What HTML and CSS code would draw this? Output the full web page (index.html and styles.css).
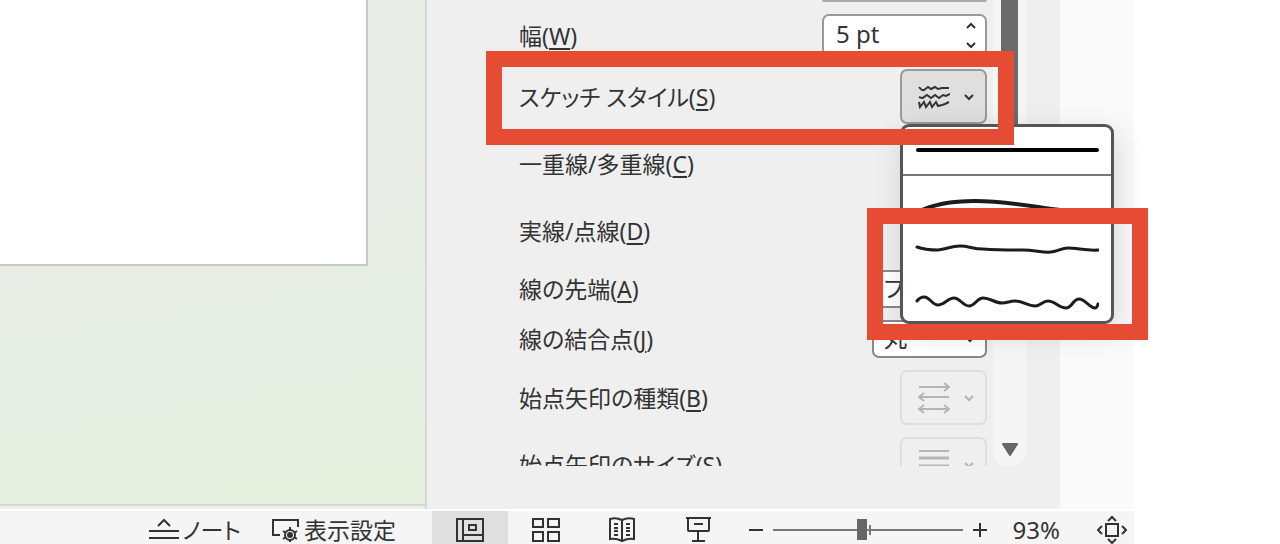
FILE: index.html
```html
<!DOCTYPE html>
<html lang="ja">
<head>
    <meta charset="UTF-8">
    <meta name="viewport" content="width=device-width, initial-scale=1.0">
    <title>図形の書式設定</title>
    <link rel="stylesheet" href="styles.css">
</head>
<body>
    <div class="app">
        <div class="workspace">
            <main class="canvas">
                <div class="slide"></div>
            </main>

            <aside class="pane">
                <div class="rows">
                    <div class="row previous"><span class="previous-box"></span></div>
                    <div class="row">
                        <label for="width">幅(<u>W</u>)</label>
                        <div class="spinner">
                            <input type="text" id="width" value="5 pt">
                            <div class="steps">
                                <button type="button" aria-label="増やす"><svg width="12" height="8" viewBox="0 0 12 8"><path d="M2 6l4-4 4 4"/></svg></button>
                                <button type="button" aria-label="減らす"><svg width="12" height="8" viewBox="0 0 12 8"><path d="M2 2l4 4 4-4"/></svg></button>
                            </div>
                        </div>
                    </div>
                    <div class="row">
                        <label for="sketch">スケッチ スタイル(<u>S</u>)</label>
                        <div class="dropdown">
                            <button type="button" class="picker active" id="sketch">
                                <svg width="32" height="26" viewBox="0 0 32 26">
                                    <path d="M1 3q3 4 5 3l4-3 3 2 4-2 3 2 4-1 7 0M1 13q4 2 5 0l3-2 4 3 4-3 4 3 4-3 3 1 4-2M1 18l1 5 4-5 2 5 4-5 2 5 4-5 2 4 4-1 3-1 4-2"/>
                                </svg>
                                <svg class="chevron" width="12" height="8" viewBox="0 0 12 8"><path d="M2 2l4 4 4-4"/></svg>
                            </button>
                            <div class="menu">
                                <button type="button" class="style straight" aria-label="なし"><svg width="184" height="47" viewBox="0 0 184 47"><path d="M3 23H182"/></svg></button>
                                <button type="button" class="style" aria-label="曲線"><svg width="184" height="49" viewBox="0 0 184 49"><path class="bold" d="M3 36C20 27 40 25 60 25C90 25 115 30 145 34L183 39"/></svg></button>
                                <button type="button" class="style" aria-label="フリーハンド"><svg width="184" height="49" viewBox="0 0 184 49"><path d="M2 22C10 25 16 25 23 25C32 24 36 21 45 21C54 21 58 24 68 24C82 25 98 25 108 25C120 25 128 28 136 27C144 26 146 23 153 23C162 23 172 26 183 25"/></svg></button>
                                <button type="button" class="style" aria-label="落書き"><svg width="184" height="47" viewBox="0 0 184 47"><path d="M2 27Q5 23 9 23C15 23 17 31 23 31C29 31 33 24 39 24C45 24 48 32 54 32C60 32 62 24 68 24C75 24 80 29 87 29C92 29 95 27 100 27C108 27 113 32 120 32C126 32 127 27 133 27C140 27 144 34 151 34C157 34 158 25 164 25C170 25 175 34 180 34Q182 34 183 30"/></svg></button>
                            </div>
                        </div>
                    </div>
                    <div class="row">
                        <label for="compound">一重線/多重線(<u>C</u>)</label>
                        <button type="button" class="picker" id="compound"></button>
                    </div>
                    <div class="row">
                        <label for="dash">実線/点線(<u>D</u>)</label>
                        <button type="button" class="picker" id="dash"></button>
                    </div>
                    <div class="row">
                        <label for="cap">線の先端(<u>A</u>)</label>
                        <div class="combo">
                            <select id="cap"><option>フラット</option></select>
                            <svg class="chevron" width="12" height="8" viewBox="0 0 12 8"><path d="M2 2l4 4 4-4"/></svg>
                        </div>
                    </div>
                    <div class="row">
                        <label for="join">線の結合点(<u>J</u>)</label>
                        <div class="combo">
                            <select id="join"><option>丸</option></select>
                            <svg class="chevron" width="12" height="8" viewBox="0 0 12 8"><path d="M2 2l4 4 4-4"/></svg>
                        </div>
                    </div>
                    <div class="row">
                        <label for="arrowType">始点矢印の種類(<u>B</u>)</label>
                        <button type="button" class="picker" id="arrowType" disabled>
                            <svg width="32" height="32" viewBox="0 0 32 32">
                                <path d="M1 5H30M26 1l5 4-5 4M31 15H2M6 11l-5 4 5 4M2 27H30M6 23l-5 4 5 4M26 23l5 4-5 4"/>
                            </svg>
                            <svg class="chevron" width="12" height="8" viewBox="0 0 12 8"><path d="M2 2l4 4 4-4"/></svg>
                        </button>
                    </div>
                    <div class="row">
                        <label for="arrowSize">始点矢印のサイズ(<u>S</u>)</label>
                        <button type="button" class="picker" id="arrowSize" disabled>
                            <svg width="32" height="32" viewBox="0 0 32 32">
                                <path d="M1 2H31"/>
                                <path class="thick" d="M1 9H31M1 17H31"/>
                            </svg>
                            <svg class="chevron" width="12" height="8" viewBox="0 0 12 8"><path d="M2 2l4 4 4-4"/></svg>
                        </button>
                    </div>
                </div>
                <div class="scrollbar">
                    <div class="thumb"></div>
                    <svg width="18" height="14" viewBox="0 0 18 14"><path d="M2 1H16L9 12Z"/></svg>
                </div>
            </aside>

            <div class="gutter"></div>
        </div>

        <footer class="statusbar">
            <div class="tools">
                <button type="button" class="tool">
                    <svg width="32" height="24" viewBox="0 0 32 24"><path d="M10 8l6-6 6 6M1 13H31M1 20H31"/></svg>
                    ノート
                </button>
                <button type="button" class="tool">
                    <svg width="30" height="26" viewBox="0 0 30 26">
                        <path d="M9 18H2V3H27V10"/>
                        <path d="M19 10v3M19 22v3M12 14l3 2M23 20l3 2M26 14l-3 2M15 20l-3 2"/>
                        <circle cx="19" cy="18" r="5"/>
                        <circle class="dot" cx="19" cy="18" r="2"/>
                    </svg>
                    表示設定
                </button>
            </div>
            <div class="views">
                <button type="button" class="view selected" aria-label="標準">
                    <svg width="30" height="26" viewBox="0 0 30 26"><path d="M2 2H28V24H2ZM8 2V24M8 18H28M14 8H21V13H14Z"/></svg>
                </button>
                <button type="button" class="view" aria-label="スライド一覧">
                    <svg width="30" height="26" viewBox="0 0 30 26"><path d="M2 2H12V10H2ZM17 2H28V10H17ZM2 15H12V24H2ZM17 15H28V24H17Z"/></svg>
                </button>
                <button type="button" class="view" aria-label="閲覧表示">
                    <svg width="30" height="26" viewBox="0 0 30 26">
                        <path d="M15 3Q9 0 3 2V22Q9 21 15 24Q21 21 27 22V2Q21 0 15 3V25"/>
                        <path d="M7 7h4M7 11h4M7 14h4M7 18h4M19 7h4M19 11h4M19 14h4M19 18h4"/>
                    </svg>
                </button>
                <button type="button" class="view" aria-label="スライドショー">
                    <svg width="30" height="26" viewBox="0 0 30 26"><path d="M3 1H28M5 1V13Q5 14 6 14H25Q26 14 26 13V1M11 7H20M15 14V24M9 24H22"/></svg>
                </button>
            </div>
            <div class="zoom">
                <button type="button" class="zoom-step" aria-label="縮小"><svg width="16" height="16" viewBox="0 0 16 16"><path d="M1 8H15"/></svg></button>
                <input type="range" min="0" max="100" value="47" aria-label="ズーム">
                <button type="button" class="zoom-step" aria-label="拡大"><svg width="16" height="16" viewBox="0 0 16 16"><path d="M1 8H15M8 1V15"/></svg></button>
                <span class="percent">93%</span>
                <button type="button" class="zoom-step" aria-label="ウィンドウに合わせる">
                    <svg width="30" height="30" viewBox="0 0 30 30"><path d="M9 9H21V21H9ZM11 6l4-4 4 4M11 24l4 4 4-4M5 11l-4 4 4 4M25 11l4 4-4 4"/></svg>
                </button>
            </div>
        </footer>
    </div>

    <div class="callout callout-sketch"></div>
    <div class="callout callout-styles"></div>
</body>
</html>
```
FILE: styles.css
```css
* {
    box-sizing: border-box;
}
body {
    margin: 0;
    background: white;
    color: #333;
    font-family: "Noto Sans", "Noto Sans CJK JP", sans-serif;
    font-size: 23px;
    font-feature-settings: "palt";
    overflow: hidden;
}
button, input, select {
    margin: 0;
    padding: 0;
    border: none;
    background: none;
    color: inherit;
    font: inherit;
    font-feature-settings: inherit;
}
svg {
    display: block;
    flex: none;
    fill: none;
    stroke: #333;
    stroke-width: 2;
}
.app {
    display: flex;
    flex-direction: column;
    height: 100vh;
    margin-right: 146px;
}
.workspace {
    display: flex;
    flex: 1;
    min-height: 0;
    border-bottom: 2px solid white;
}
.canvas {
    flex: 0 0 427px;
    padding: 0 57px 243px 0;
    background: linear-gradient(170deg, #e8ebe6 40%, #e6eee4 65%, #e5efdc);
    border-right: 2px solid #d5d9d5;
    box-shadow: inset 0 -3px #f0f0ea, inset 0 -5px #d5d9d5;
}
.slide {
    height: 100%;
    background: white;
    border: solid #c8cac8;
    border-width: 0 2px 2px 0;
}

/* Format pane */
.pane {
    display: flex;
    flex: 1;
    gap: 6px;
    padding: 0 34px 43px 92px;
    background: #efefef;
}
.rows {
    display: flex;
    flex: 1;
    flex-direction: column;
    gap: 12px;
    min-height: 0;
    /* cut the list at the bottom but let the menu hang out on the right */
    clip-path: inset(0 -160px 0 0);
}
.row {
    display: flex;
    flex: none;
    align-items: center;
    justify-content: space-between;
}
.row label {
    line-height: 32px;
    white-space: nowrap;
}
.row u {
    text-decoration-thickness: 2px;
    text-underline-offset: 3px;
}
.previous-box {
    width: 165px;
    height: 2px;
    margin-left: auto;
    background: #aaa;
    border-radius: 0 0 6px 6px;
}
.spinner {
    display: flex;
    align-items: center;
    width: 165px;
    height: 43px;
    padding: 0 8px 0 12px;
    background: white;
    border: 2px solid #999;
    border-radius: 7px;
}
.spinner input {
    flex: 1;
    min-width: 0;
    padding-bottom: 4px;
    font-size: 24px;
}
.steps {
    display: grid;
    gap: 11px;
}
.dropdown {
    position: relative;
}
.picker {
    display: flex;
    align-items: center;
    gap: 13px;
    width: 87px;
    height: 55px;
    padding-left: 16px;
    border: 2px solid #aaa;
    border-radius: 7px;
}
.picker.active {
    background: #dfdfdf;
    border-color: #999;
}
.picker:disabled {
    border-color: #dedede;
}
.picker:disabled svg {
    stroke: #b5b5b5;
}
.picker .thick {
    stroke-width: 3;
}
.menu {
    position: absolute;
    z-index: 1;
    top: 55px;
    left: 0;
    width: 214px;
    background: white;
    border: 3px solid #555;
    border-radius: 9px;
    box-shadow: 4px 8px 30px rgba(0, 0, 0, 0.14);
}
.style {
    display: flex;
    justify-content: center;
    width: 100%;
}
.style svg {
    stroke: #1c1c1c;
    stroke-width: 3;
    stroke-linecap: round;
}
.style .bold {
    stroke-width: 4;
}
.straight {
    border-bottom: 2px solid #777;
}
.straight svg {
    stroke: black;
    stroke-width: 4;
}
.combo {
    display: grid;
    align-items: center;
    width: 115px;
}
.combo select {
    grid-area: 1 / 1;
    height: 38px;
    padding: 0 30px 2px 10px;
    background: white;
    border: 2px solid #888;
    border-radius: 7px;
    appearance: none;
}
.combo .chevron {
    grid-area: 1 / 1;
    justify-self: end;
    margin-right: 11px;
    pointer-events: none;
}
.scrollbar {
    display: flex;
    flex-direction: column;
    align-items: center;
    justify-content: space-between;
    width: 33px;
    padding-bottom: 9px;
    background: #f5f5f5;
    border-radius: 0 0 14px 14px;
}
.scrollbar svg {
    fill: #666;
    stroke: #666;
    stroke-linejoin: round;
}
.thumb {
    width: 17px;
    height: 135px;
    background: #6b6b6b;
}
.gutter {
    flex: 0 0 74px;
    background: #fafafa;
}

/* Status bar */
.statusbar {
    display: flex;
    height: 33px;
    background: #f5f5f5;
}
.tools {
    display: flex;
    flex: 0 0 432px;
    justify-content: flex-end;
    gap: 30px;
    padding-right: 36px;
}
.tool {
    display: flex;
    align-items: center;
    gap: 3px;
    padding-top: 4px;
    line-height: 28px;
    white-space: nowrap;
}
.tool .dot {
    fill: #333;
}
.views {
    display: flex;
}
.view {
    display: flex;
    justify-content: center;
    width: 76px;
    padding-top: 6px;
}
.selected {
    background: #dfdfdf;
}
.zoom {
    display: flex;
    flex: 1;
    align-items: center;
    justify-content: flex-end;
    gap: 9px;
    padding: 4px 7px 0 0;
}
.zoom input {
    width: 190px;
    height: 22px;
    appearance: none;
    background:
        linear-gradient(#777, #777) 96px center / 2px 10px no-repeat,
        linear-gradient(#777, #777) center / 100% 2px no-repeat;
}
.zoom input::-webkit-slider-thumb {
    appearance: none;
    width: 10px;
    height: 21px;
    background: #666;
}
.percent {
    margin: 0 28px 0 16px;
    font-size: 24px;
    line-height: 28px;
}

/* Red highlight frames drawn over the window */
.callout {
    position: absolute;
    z-index: 2;
    border: 16px solid #e64b33;
    pointer-events: none;
}
.callout-sketch {
    top: 51px;
    left: 486px;
    width: 528px;
    height: 94px;
}
.callout-styles {
    top: 208px;
    left: 867px;
    width: 281px;
    height: 132px;
}
```
